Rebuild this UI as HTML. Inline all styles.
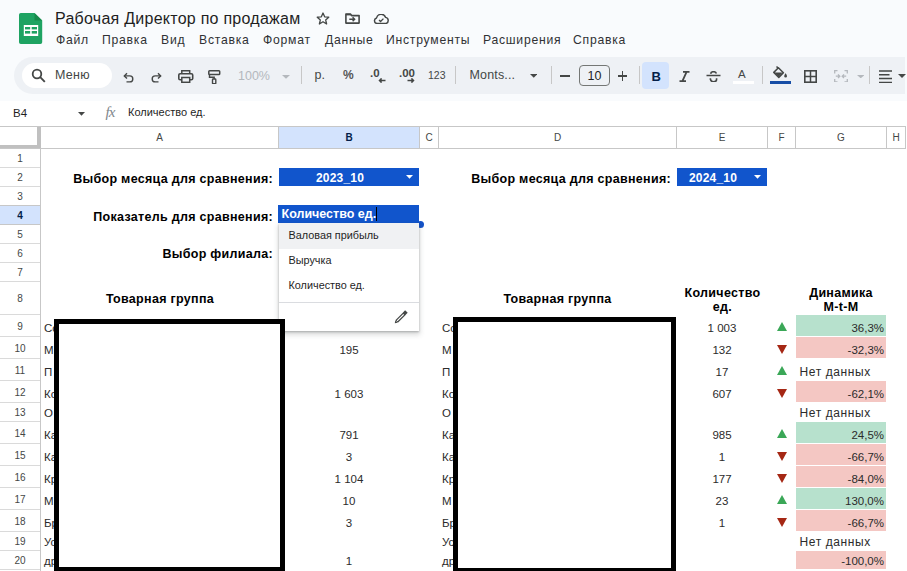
<!DOCTYPE html>
<html><head><meta charset="utf-8">
<style>
*{box-sizing:border-box;}
html,body{margin:0;padding:0;}
body{width:907px;height:571px;overflow:hidden;position:relative;background:#fff;font-family:"Liberation Sans",sans-serif;color:#1f1f1f;}
.a{position:absolute;white-space:nowrap;}
#top{position:absolute;left:0;top:0;width:907px;height:101px;background:#f9fbfd;}
#tb{position:absolute;left:14px;top:57px;width:891px;height:37px;background:#eef1f5;border-radius:19px 0 0 19px;}
.menu{font-size:12.2px;top:32.6px;color:#303134;letter-spacing:0.75px;}
.tbt{font-size:11px;color:#444746;}
.sep{position:absolute;top:66px;width:1px;height:18px;background:#c7c7c7;}
</style></head><body>
<div id="top"></div>
<div id="tb"></div>
<!-- sheets icon -->
<svg class="a" style="left:19px;top:13px" width="24" height="31" viewBox="0 0 24 31">
<path d="M1.8 0H15.5L23.2 7.5V29.2A1.8 1.8 0 0 1 21.4 31H1.8A1.8 1.8 0 0 1 0 29.2V1.8A1.8 1.8 0 0 1 1.8 0Z" fill="#1ea362"/>
<path d="M15.5 0V7.5H23.2Z" fill="#178a4b"/>
<rect x="4.8" y="12" width="14.4" height="11" fill="#fff"/>
<rect x="6" y="14" width="5.2" height="2.4" fill="#1ea362"/><rect x="12.7" y="14" width="5.3" height="2.4" fill="#1ea362"/>
<rect x="6" y="18" width="5.2" height="2.6" fill="#1ea362"/><rect x="12.7" y="18" width="5.3" height="2.6" fill="#1ea362"/>
</svg>
<div class="a" id="title" style="left:55px;top:9.7px;font-size:16px;letter-spacing:0.26px;color:#1f1f1f;">Рабочая Директор по продажам</div>
<!-- star -->
<svg class="a" style="left:316px;top:12px" width="14" height="13" viewBox="0 0 24 23"><path d="M12 1.8l2.9 6.8 7.3.6-5.5 4.8 1.7 7.2-6.4-3.9-6.4 3.9 1.7-7.2L1.8 9.2l7.3-.6z" fill="none" stroke="#444746" stroke-width="2.3" stroke-linejoin="round"/></svg>
<!-- folder move -->
<svg class="a" style="left:345px;top:13px" width="15" height="11" viewBox="0 0 15 11"><path d="M0.9 1V10.1H14.1V2.6H6.8L5.4 1Z" fill="none" stroke="#444746" stroke-width="1.6" stroke-linejoin="round"/><path d="M1 1.6H6" stroke="#444746" stroke-width="1.6"/><path d="M4.3 6.2H9.6M7.6 4.2L9.6 6.2 7.6 8.2" fill="none" stroke="#444746" stroke-width="1.5"/></svg>
<!-- cloud -->
<svg class="a" style="left:372.5px;top:13.5px" width="16.5" height="10.5" viewBox="0 0 24 15"><path d="M5.8 13.8A4.2 4.2 0 0 1 5.2 5.6 6.9 6.9 0 0 1 18.4 4.8 4.6 4.6 0 0 1 18.6 13.8Z" fill="none" stroke="#444746" stroke-width="2.1" stroke-linejoin="round"/><path d="M8.8 8.6L11 10.8 15.2 6.6" fill="none" stroke="#444746" stroke-width="2"/></svg>
<div class="a menu" style="left:56px">Файл</div>
<div class="a menu" style="left:102px">Правка</div>
<div class="a menu" style="left:161px">Вид</div>
<div class="a menu" style="left:199px">Вставка</div>
<div class="a menu" style="left:263px">Формат</div>
<div class="a menu" style="left:325px">Данные</div>
<div class="a menu" style="left:386px">Инструменты</div>
<div class="a menu" style="left:483px">Расширения</div>
<div class="a menu" style="left:573px">Справка</div>
<!-- toolbar -->
<div class="a" style="left:22px;top:63px;width:90px;height:25px;background:#fff;border-radius:13px;"></div>
<svg class="a" style="left:31px;top:68px" width="15" height="15" viewBox="0 0 15 15"><circle cx="6" cy="6" r="4.3" fill="none" stroke="#444746" stroke-width="1.8"/><path d="M9.2 9.2L13.8 13.8" stroke="#444746" stroke-width="1.9"/></svg>
<div class="a" style="left:55px;top:67.7px;font-size:12.5px;letter-spacing:0.3px;color:#444746;">Меню</div>
<!-- undo -->
<svg class="a" style="left:123px;top:72px" width="11" height="11" viewBox="0 0 11 11"><path d="M3.5 9.9H6.8A3 3 0 0 0 6.8 3.9H1.5" fill="none" stroke="#444746" stroke-width="1.4"/><path d="M4 1.2L1.3 3.9 4 6.6" fill="none" stroke="#444746" stroke-width="1.4"/></svg>
<!-- redo -->
<svg class="a" style="left:151px;top:72px" width="11" height="11" viewBox="0 0 11 11"><path d="M7.5 9.9H4.2A3 3 0 0 1 4.2 3.9H9.5" fill="none" stroke="#444746" stroke-width="1.4"/><path d="M7 1.2L9.7 3.9 7 6.6" fill="none" stroke="#444746" stroke-width="1.4"/></svg>
<!-- print -->
<svg class="a" style="left:178px;top:69.5px" width="15.5" height="13" viewBox="0 0 15.5 13"><path d="M3.8 3.5V0.8H11.7V3.5" fill="none" stroke="#444746" stroke-width="1.5"/><rect x="0.8" y="3.8" width="13.9" height="6" rx="1.3" fill="none" stroke="#444746" stroke-width="1.6"/><rect x="3.8" y="7.5" width="7.9" height="4.8" fill="#eef1f5" stroke="#444746" stroke-width="1.5"/></svg>
<!-- paint format -->
<svg class="a" style="left:208px;top:69.5px" width="12.5" height="14.5" viewBox="0 0 12.5 14.5"><rect x="0.8" y="0.8" width="10.9" height="3.8" rx="0.8" fill="none" stroke="#444746" stroke-width="1.5"/><path d="M1.5 4.6V7.2H6.2V9" fill="none" stroke="#444746" stroke-width="1.4"/><rect x="4.5" y="9" width="3.3" height="4.8" rx=".7" fill="none" stroke="#444746" stroke-width="1.4"/></svg>
<div class="a tbt" style="left:238px;top:68.5px;font-size:12.5px;color:#b4b8bd;">100%</div>
<svg class="a" style="left:282px;top:74.8px" width="8" height="4" viewBox="0 0 8 4"><path d="M0 0H8L4 3.8Z" fill="#b4b8bd"/></svg>
<div class="sep" style="left:301px"></div>
<div class="a tbt" style="left:314.5px;top:68px;font-size:12.5px;">р.</div>
<div class="a tbt" style="left:343px;top:68px;font-size:12px;font-weight:bold;letter-spacing:-0.5px;color:#555;">%</div>
<div class="a tbt" style="left:370px;top:66.5px;font-size:11.5px;font-weight:bold;">.0</div>
<svg class="a" style="left:377.5px;top:78px" width="8" height="5" viewBox="0 0 8 5"><path d="M7.5 2.5H1.5M3.6 0.4L1.5 2.5 3.6 4.6" fill="none" stroke="#444746" stroke-width="1.5"/></svg>
<div class="a tbt" style="left:399px;top:66.5px;font-size:11.5px;font-weight:bold;">.00</div>
<svg class="a" style="left:406.5px;top:78px" width="8" height="5" viewBox="0 0 8 5"><path d="M0.5 2.5H6.5M4.4 0.4L6.5 2.5 4.4 4.6" fill="none" stroke="#444746" stroke-width="1.5"/></svg>
<div class="a tbt" style="left:428px;top:69px;font-size:10.5px;">123</div>
<div class="sep" style="left:454.5px"></div>
<div class="a tbt" style="left:469.5px;top:68px;font-size:12.5px;letter-spacing:0.15px;">Monts...</div>
<svg class="a" style="left:529.5px;top:73.5px" width="7.5" height="4" viewBox="0 0 7.5 4"><path d="M0 0H7.5L3.75 3.8Z" fill="#444746"/></svg>
<div class="sep" style="left:550.5px"></div>
<div class="a" style="left:560px;top:75.2px;width:10.3px;height:1.7px;background:#444746"></div>
<div class="a" style="left:579px;top:65px;width:31px;height:21px;border:1px solid #747775;border-radius:4px;font-size:12.5px;color:#1f1f1f;text-align:center;line-height:21px;">10</div>
<div class="a" style="left:617.8px;top:74.9px;width:9.6px;height:1.7px;background:#444746"></div>
<div class="a" style="left:621.8px;top:71px;width:1.7px;height:9.5px;background:#444746"></div>
<div class="sep" style="left:639px"></div>
<div class="a" style="left:642px;top:62px;width:27px;height:27px;background:#d3e3fd;border-radius:4px;"></div>
<div class="a" style="left:651.5px;top:68.5px;font-size:13px;font-weight:bold;color:#041e49;">B</div>
<svg class="a" style="left:679px;top:71px" width="11" height="11" viewBox="0 0 11 11"><path d="M4 0.9H10.5M0.5 10.1H7M7.6 0.9L3.4 10.1" fill="none" stroke="#444746" stroke-width="1.8"/></svg>
<svg class="a" style="left:705.5px;top:70.5px" width="15" height="11.5" viewBox="0 0 15 11.5"><path d="M0.5 4.5H14.5" stroke="#444746" stroke-width="1.5"/><path d="M4.6 2.8C4.9 1.5 6 0.7 7.5 0.7 9 0.7 10 1.4 10.4 2.6" fill="none" stroke="#444746" stroke-width="1.6"/><path d="M4.4 7.2V8.3C4.8 10 6 10.8 7.6 10.8 9.4 10.8 10.6 9.7 10.6 8.2V7.2" fill="none" stroke="#444746" stroke-width="1.6"/></svg>
<div class="a tbt" style="left:738px;top:67.5px;font-size:11.5px;">A</div>
<div class="a" style="left:733px;top:81px;width:21px;height:3px;background:#fff;"></div>
<div class="sep" style="left:762px"></div>
<svg class="a" style="left:773px;top:66px" width="15" height="12.5" viewBox="0 0 15 12.5"><path d="M3.5 0.5L5 2" stroke="#444746" stroke-width="1.5"/><path d="M5.4 1.8L10.4 6.8 5.8 11.4 0.8 6.4Z" fill="none" stroke="#444746" stroke-width="1.5" stroke-linejoin="round"/><path d="M1.4 6.6H9.8L5.8 10.7Z" fill="#444746"/><path d="M12.6 7.3C12.6 7.3 11.2 9.2 11.2 10.2A1.4 1.4 0 0 0 14 10.2C14 9.2 12.6 7.3 12.6 7.3Z" fill="#444746"/></svg>
<div class="a" style="left:770px;top:81px;width:21px;height:3px;background:#174ea6;"></div>
<svg class="a" style="left:804px;top:70px" width="13" height="13" viewBox="0 0 13 13"><rect x="0.8" y="0.8" width="11.4" height="11.4" fill="none" stroke="#444746" stroke-width="1.6"/><path d="M6.5 0.5V12.5M0.5 6.5H12.5" stroke="#444746" stroke-width="1.5"/></svg>
<svg class="a" style="left:834px;top:69.5px" width="14" height="12.5" viewBox="0 0 14 12.5"><path d="M0.7 3.5V0.7H3.5M10.5 0.7H13.3V3.5M13.3 9V11.8H10.5M3.5 11.8H0.7V9" fill="none" stroke="#b4b8bd" stroke-width="1.3"/><path d="M1.8 6.2H5.6M4 4.4L5.8 6.2 4 8M12.2 6.2H8.4M10 4.4L8.2 6.2 10 8" fill="none" stroke="#b4b8bd" stroke-width="1.3"/></svg>
<svg class="a" style="left:856.5px;top:74.5px" width="7.5" height="3.5" viewBox="0 0 7.5 3.5"><path d="M0 0H7.5L3.75 3.3Z" fill="#b4b8bd"/></svg>
<div class="sep" style="left:869px"></div>
<svg class="a" style="left:879px;top:69.5px" width="13" height="13.5" viewBox="0 0 13 13.5"><path d="M0 1H13M0 4.8H10.5M0 8.6H13M0 12.4H13" stroke="#444746" stroke-width="1.5"/></svg>
<svg class="a" style="left:898px;top:74px" width="8" height="4" viewBox="0 0 8 4"><path d="M0 0H8L4 3.9Z" fill="#444746"/></svg>
<!-- formula bar -->
<div class="a" style="left:0;top:101px;width:907px;height:25px;background:#fff;"></div>
<div class="a" style="left:13px;top:106.8px;font-size:11.5px;color:#1f1f1f;">B4</div>
<svg class="a" style="left:78px;top:111.5px" width="7" height="4" viewBox="0 0 7 4"><path d="M0 0H7L3.5 3.8Z" fill="#444746"/></svg>
<div class="a" style="left:105.5px;top:103.5px;font-size:15px;font-style:italic;font-family:'Liberation Serif',serif;color:#80868b;letter-spacing:-0.8px;">fx</div>
<div class="a" style="left:128px;top:106px;font-size:11px;color:#1f1f1f;">Количество ед.</div>
<div class="a" style="left:0;top:126px;width:906px;height:1px;background:#c7c7c7;"></div>
<div class="a" style="left:0;top:148px;width:906px;height:1px;background:#c7c7c7;"></div>
<div class="a" style="left:37px;top:127px;width:4px;height:21px;background:#c0c0c0;"></div>
<div class="a" style="left:0;top:145px;width:40px;height:3px;background:#c0c0c0;"></div>
<div class="a" style="left:41px;top:127px;width:237px;height:21px;background:#fff;font-size:10px;line-height:21.6px;text-align:center;color:#444746;">A</div>
<div class="a" style="left:278px;top:127px;width:1px;height:21px;background:#c7c7c7;"></div>
<div class="a" style="left:279px;top:127px;width:140px;height:21px;background:#d3e3fd;font-size:10px;line-height:21.6px;text-align:center;color:#444746;font-weight:bold;color:#041e49;">B</div>
<div class="a" style="left:419px;top:127px;width:1px;height:21px;background:#c7c7c7;"></div>
<div class="a" style="left:420px;top:127px;width:18px;height:21px;background:#fff;font-size:10px;line-height:21.6px;text-align:center;color:#444746;">C</div>
<div class="a" style="left:438px;top:127px;width:1px;height:21px;background:#c7c7c7;"></div>
<div class="a" style="left:439px;top:127px;width:237px;height:21px;background:#fff;font-size:10px;line-height:21.6px;text-align:center;color:#444746;">D</div>
<div class="a" style="left:676px;top:127px;width:1px;height:21px;background:#c7c7c7;"></div>
<div class="a" style="left:677px;top:127px;width:90px;height:21px;background:#fff;font-size:10px;line-height:21.6px;text-align:center;color:#444746;">E</div>
<div class="a" style="left:767px;top:127px;width:1px;height:21px;background:#c7c7c7;"></div>
<div class="a" style="left:768px;top:127px;width:27px;height:21px;background:#fff;font-size:10px;line-height:21.6px;text-align:center;color:#444746;">F</div>
<div class="a" style="left:795px;top:127px;width:1px;height:21px;background:#c7c7c7;"></div>
<div class="a" style="left:796px;top:127px;width:90px;height:21px;background:#fff;font-size:10px;line-height:21.6px;text-align:center;color:#444746;">G</div>
<div class="a" style="left:886px;top:127px;width:1px;height:21px;background:#c7c7c7;"></div>
<div class="a" style="left:887px;top:127px;width:18px;height:21px;background:#fff;font-size:10px;line-height:21.6px;text-align:center;color:#444746;">H</div>
<div class="a" style="left:905px;top:127px;width:1px;height:21px;background:#c7c7c7;"></div>
<div class="a" style="left:0;top:149px;width:40px;height:18px;background:#fff;font-size:10px;padding-top:1.2px;line-height:18px;text-align:center;color:#444746;">1</div>
<div class="a" style="left:0;top:167px;width:40px;height:1px;background:#dadada;"></div>
<div class="a" style="left:0;top:168px;width:40px;height:18px;background:#fff;font-size:10px;padding-top:1.2px;line-height:18px;text-align:center;color:#444746;">2</div>
<div class="a" style="left:0;top:186px;width:40px;height:1px;background:#dadada;"></div>
<div class="a" style="left:0;top:187px;width:40px;height:18px;background:#fff;font-size:10px;padding-top:1.2px;line-height:18px;text-align:center;color:#444746;">3</div>
<div class="a" style="left:0;top:205px;width:40px;height:1px;background:#dadada;"></div>
<div class="a" style="left:0;top:206px;width:40px;height:18px;background:#d3e3fd;font-size:10px;padding-top:1.2px;line-height:18px;text-align:center;color:#444746;font-weight:bold;color:#041e49;">4</div>
<div class="a" style="left:0;top:224px;width:40px;height:1px;background:#dadada;"></div>
<div class="a" style="left:0;top:225px;width:40px;height:18px;background:#fff;font-size:10px;padding-top:1.2px;line-height:18px;text-align:center;color:#444746;">5</div>
<div class="a" style="left:0;top:243px;width:40px;height:1px;background:#dadada;"></div>
<div class="a" style="left:0;top:244px;width:40px;height:18px;background:#fff;font-size:10px;padding-top:1.2px;line-height:18px;text-align:center;color:#444746;">6</div>
<div class="a" style="left:0;top:262px;width:40px;height:1px;background:#dadada;"></div>
<div class="a" style="left:0;top:263px;width:40px;height:18px;background:#fff;font-size:10px;padding-top:1.2px;line-height:18px;text-align:center;color:#444746;">7</div>
<div class="a" style="left:0;top:281px;width:40px;height:1px;background:#dadada;"></div>
<div class="a" style="left:0;top:282px;width:40px;height:32px;background:#fff;font-size:10px;padding-top:1.2px;line-height:32px;text-align:center;color:#444746;">8</div>
<div class="a" style="left:0;top:314px;width:40px;height:1px;background:#dadada;"></div>
<div class="a" style="left:0;top:315px;width:40px;height:21px;background:#fff;font-size:10px;padding-top:1.2px;line-height:21px;text-align:center;color:#444746;">9</div>
<div class="a" style="left:0;top:336px;width:40px;height:1px;background:#dadada;"></div>
<div class="a" style="left:0;top:337px;width:40px;height:21px;background:#fff;font-size:10px;padding-top:1.2px;line-height:21px;text-align:center;color:#444746;">10</div>
<div class="a" style="left:0;top:358px;width:40px;height:1px;background:#dadada;"></div>
<div class="a" style="left:0;top:359px;width:40px;height:21px;background:#fff;font-size:10px;padding-top:1.2px;line-height:21px;text-align:center;color:#444746;">11</div>
<div class="a" style="left:0;top:380px;width:40px;height:1px;background:#dadada;"></div>
<div class="a" style="left:0;top:381px;width:40px;height:21px;background:#fff;font-size:10px;padding-top:1.2px;line-height:21px;text-align:center;color:#444746;">12</div>
<div class="a" style="left:0;top:402px;width:40px;height:1px;background:#dadada;"></div>
<div class="a" style="left:0;top:403px;width:40px;height:18px;background:#fff;font-size:10px;padding-top:1.2px;line-height:18px;text-align:center;color:#444746;">13</div>
<div class="a" style="left:0;top:421px;width:40px;height:1px;background:#dadada;"></div>
<div class="a" style="left:0;top:422px;width:40px;height:21px;background:#fff;font-size:10px;padding-top:1.2px;line-height:21px;text-align:center;color:#444746;">14</div>
<div class="a" style="left:0;top:443px;width:40px;height:1px;background:#dadada;"></div>
<div class="a" style="left:0;top:444px;width:40px;height:21px;background:#fff;font-size:10px;padding-top:1.2px;line-height:21px;text-align:center;color:#444746;">15</div>
<div class="a" style="left:0;top:465px;width:40px;height:1px;background:#dadada;"></div>
<div class="a" style="left:0;top:466px;width:40px;height:21px;background:#fff;font-size:10px;padding-top:1.2px;line-height:21px;text-align:center;color:#444746;">16</div>
<div class="a" style="left:0;top:487px;width:40px;height:1px;background:#dadada;"></div>
<div class="a" style="left:0;top:488px;width:40px;height:21px;background:#fff;font-size:10px;padding-top:1.2px;line-height:21px;text-align:center;color:#444746;">17</div>
<div class="a" style="left:0;top:509px;width:40px;height:1px;background:#dadada;"></div>
<div class="a" style="left:0;top:510px;width:40px;height:21px;background:#fff;font-size:10px;padding-top:1.2px;line-height:21px;text-align:center;color:#444746;">18</div>
<div class="a" style="left:0;top:531px;width:40px;height:1px;background:#dadada;"></div>
<div class="a" style="left:0;top:532px;width:40px;height:18px;background:#fff;font-size:10px;padding-top:1.2px;line-height:18px;text-align:center;color:#444746;">19</div>
<div class="a" style="left:0;top:550px;width:40px;height:1px;background:#dadada;"></div>
<div class="a" style="left:0;top:551px;width:40px;height:18px;background:#fff;font-size:10px;padding-top:1.2px;line-height:18px;text-align:center;color:#444746;">20</div>
<div class="a" style="left:0;top:569px;width:40px;height:1px;background:#dadada;"></div>
<div class="a" style="left:0;top:205px;width:40px;height:1px;background:#c7c7c7;"></div>
<div class="a" style="left:0;top:224px;width:40px;height:1px;background:#c7c7c7;"></div>
<div class="a" style="left:40px;top:148px;width:1px;height:423px;background:#c7c7c7;"></div>
<div class="a" style="right:634px;top:171.5px;font-weight:bold;font-size:12.5px;letter-spacing:0.3px;color:#000;">Выбор месяца для сравнения:</div>
<div class="a" style="right:236px;top:171.5px;font-weight:bold;font-size:12.5px;letter-spacing:0.3px;color:#000;">Выбор месяца для сравнения:</div>
<div class="a" style="right:634px;top:209.5px;font-weight:bold;font-size:12.5px;letter-spacing:0.3px;color:#000;">Показатель для сравнения:</div>
<div class="a" style="right:634px;top:247px;font-weight:bold;font-size:12.5px;letter-spacing:0.3px;color:#000;">Выбор филиала:</div>
<div class="a" style="left:10px;width:300px;text-align:center;top:291.5px;font-weight:bold;font-size:12.5px;letter-spacing:0.3px;color:#000;">Товарная группа</div>
<div class="a" style="left:407.5px;width:300px;text-align:center;top:291.5px;font-weight:bold;font-size:12.5px;letter-spacing:0.3px;color:#000;">Товарная группа</div>
<div class="a" style="left:572.5px;width:300px;text-align:center;top:285.5px;font-weight:bold;font-size:12.5px;letter-spacing:0.3px;color:#000;">Количество</div>
<div class="a" style="left:572.5px;width:300px;text-align:center;top:299.5px;font-weight:bold;font-size:12.5px;letter-spacing:0.3px;color:#000;">ед.</div>
<div class="a" style="left:691px;width:300px;text-align:center;top:285.5px;font-weight:bold;font-size:12.5px;letter-spacing:0.3px;color:#000;">Динамика</div>
<div class="a" style="left:691px;width:300px;text-align:center;top:299.5px;font-weight:bold;font-size:12.5px;letter-spacing:0.3px;color:#000;">M-t-M</div>
<div class="a" style="left:279px;top:168px;width:140px;height:18px;background:#1155cc;"></div>
<div class="a" style="left:190px;width:300px;text-align:center;top:170.5px;font-weight:bold;font-size:12px;letter-spacing:0.2px;color:#fff;">2023_10</div>
<svg class="a" style="left:406px;top:175px" width="7" height="4" viewBox="0 0 7 4"><path d="M0 0H7L3.5 3.8Z" fill="#fff"/></svg>
<div class="a" style="left:677px;top:168px;width:90px;height:18px;background:#1155cc;"></div>
<div class="a" style="left:563px;width:300px;text-align:center;top:170.5px;font-weight:bold;font-size:12px;letter-spacing:0.2px;color:#fff;">2024_10</div>
<svg class="a" style="left:754px;top:175px" width="7" height="4" viewBox="0 0 7 4"><path d="M0 0H7L3.5 3.8Z" fill="#fff"/></svg>
<div class="a" style="left:572px;width:300px;text-align:center;top:321.7px;font-size:11.5px;color:#2b2b2b;">1 003</div>
<svg class="a" style="left:777px;top:321.5px" width="10" height="9" viewBox="0 0 10 9"><path d="M5 0L10 9H0Z" fill="#3aa757"/></svg>
<div class="a" style="left:796px;top:315px;width:90px;height:21px;background:#b7e1cd;"></div>
<div class="a" style="right:23px;top:321.7px;font-size:11.5px;color:#2b2b2b;">36,3%</div>
<div class="a" style="left:44px;top:321.7px;font-size:11.5px;color:#2b2b2b;">Со</div>
<div class="a" style="left:442px;top:321.7px;font-size:11.5px;color:#2b2b2b;">Со</div>
<div class="a" style="left:199px;width:300px;text-align:center;top:343.7px;font-size:11.5px;color:#2b2b2b;">195</div>
<div class="a" style="left:572px;width:300px;text-align:center;top:343.7px;font-size:11.5px;color:#2b2b2b;">132</div>
<svg class="a" style="left:777px;top:344.5px" width="10" height="9" viewBox="0 0 10 9"><path d="M0 0H10L5 9Z" fill="#a52714"/></svg>
<div class="a" style="left:796px;top:337px;width:90px;height:21px;background:#f4c7c3;"></div>
<div class="a" style="right:23px;top:343.7px;font-size:11.5px;color:#2b2b2b;">-32,3%</div>
<div class="a" style="left:44px;top:343.7px;font-size:11.5px;color:#2b2b2b;">М</div>
<div class="a" style="left:442px;top:343.7px;font-size:11.5px;color:#2b2b2b;">М</div>
<div class="a" style="left:572px;width:300px;text-align:center;top:365.7px;font-size:11.5px;color:#2b2b2b;">17</div>
<svg class="a" style="left:777px;top:365.5px" width="10" height="9" viewBox="0 0 10 9"><path d="M5 0L10 9H0Z" fill="#3aa757"/></svg>
<div class="a" style="left:799.5px;top:365.2px;font-size:12px;letter-spacing:0.6px;color:#2b2b2b;">Нет данных</div>
<div class="a" style="left:44px;top:365.7px;font-size:11.5px;color:#2b2b2b;">П</div>
<div class="a" style="left:442px;top:365.7px;font-size:11.5px;color:#2b2b2b;">П</div>
<div class="a" style="left:199px;width:300px;text-align:center;top:387.7px;font-size:11.5px;color:#2b2b2b;">1 603</div>
<div class="a" style="left:572px;width:300px;text-align:center;top:387.7px;font-size:11.5px;color:#2b2b2b;">607</div>
<svg class="a" style="left:777px;top:388.5px" width="10" height="9" viewBox="0 0 10 9"><path d="M0 0H10L5 9Z" fill="#a52714"/></svg>
<div class="a" style="left:796px;top:381px;width:90px;height:21px;background:#f4c7c3;"></div>
<div class="a" style="right:23px;top:387.7px;font-size:11.5px;color:#2b2b2b;">-62,1%</div>
<div class="a" style="left:44px;top:387.7px;font-size:11.5px;color:#2b2b2b;">Ко</div>
<div class="a" style="left:442px;top:387.7px;font-size:11.5px;color:#2b2b2b;">Ко</div>
<div class="a" style="left:799.5px;top:406.2px;font-size:12px;letter-spacing:0.6px;color:#2b2b2b;">Нет данных</div>
<div class="a" style="left:44px;top:406.7px;font-size:11.5px;color:#2b2b2b;">О</div>
<div class="a" style="left:442px;top:406.7px;font-size:11.5px;color:#2b2b2b;">О</div>
<div class="a" style="left:199px;width:300px;text-align:center;top:428.7px;font-size:11.5px;color:#2b2b2b;">791</div>
<div class="a" style="left:572px;width:300px;text-align:center;top:428.7px;font-size:11.5px;color:#2b2b2b;">985</div>
<svg class="a" style="left:777px;top:428.5px" width="10" height="9" viewBox="0 0 10 9"><path d="M5 0L10 9H0Z" fill="#3aa757"/></svg>
<div class="a" style="left:796px;top:422px;width:90px;height:21px;background:#b7e1cd;"></div>
<div class="a" style="right:23px;top:428.7px;font-size:11.5px;color:#2b2b2b;">24,5%</div>
<div class="a" style="left:44px;top:428.7px;font-size:11.5px;color:#2b2b2b;">Ка</div>
<div class="a" style="left:442px;top:428.7px;font-size:11.5px;color:#2b2b2b;">Ка</div>
<div class="a" style="left:199px;width:300px;text-align:center;top:450.7px;font-size:11.5px;color:#2b2b2b;">3</div>
<div class="a" style="left:572px;width:300px;text-align:center;top:450.7px;font-size:11.5px;color:#2b2b2b;">1</div>
<svg class="a" style="left:777px;top:451.5px" width="10" height="9" viewBox="0 0 10 9"><path d="M0 0H10L5 9Z" fill="#a52714"/></svg>
<div class="a" style="left:796px;top:444px;width:90px;height:21px;background:#f4c7c3;"></div>
<div class="a" style="right:23px;top:450.7px;font-size:11.5px;color:#2b2b2b;">-66,7%</div>
<div class="a" style="left:44px;top:450.7px;font-size:11.5px;color:#2b2b2b;">Ка</div>
<div class="a" style="left:442px;top:450.7px;font-size:11.5px;color:#2b2b2b;">Ка</div>
<div class="a" style="left:199px;width:300px;text-align:center;top:472.7px;font-size:11.5px;color:#2b2b2b;">1 104</div>
<div class="a" style="left:572px;width:300px;text-align:center;top:472.7px;font-size:11.5px;color:#2b2b2b;">177</div>
<svg class="a" style="left:777px;top:473.5px" width="10" height="9" viewBox="0 0 10 9"><path d="M0 0H10L5 9Z" fill="#a52714"/></svg>
<div class="a" style="left:796px;top:466px;width:90px;height:21px;background:#f4c7c3;"></div>
<div class="a" style="right:23px;top:472.7px;font-size:11.5px;color:#2b2b2b;">-84,0%</div>
<div class="a" style="left:44px;top:472.7px;font-size:11.5px;color:#2b2b2b;">Кр</div>
<div class="a" style="left:442px;top:472.7px;font-size:11.5px;color:#2b2b2b;">Кр</div>
<div class="a" style="left:199px;width:300px;text-align:center;top:494.7px;font-size:11.5px;color:#2b2b2b;">10</div>
<div class="a" style="left:572px;width:300px;text-align:center;top:494.7px;font-size:11.5px;color:#2b2b2b;">23</div>
<svg class="a" style="left:777px;top:494.5px" width="10" height="9" viewBox="0 0 10 9"><path d="M5 0L10 9H0Z" fill="#3aa757"/></svg>
<div class="a" style="left:796px;top:488px;width:90px;height:21px;background:#b7e1cd;"></div>
<div class="a" style="right:23px;top:494.7px;font-size:11.5px;color:#2b2b2b;">130,0%</div>
<div class="a" style="left:44px;top:494.7px;font-size:11.5px;color:#2b2b2b;">М</div>
<div class="a" style="left:442px;top:494.7px;font-size:11.5px;color:#2b2b2b;">М</div>
<div class="a" style="left:199px;width:300px;text-align:center;top:516.7px;font-size:11.5px;color:#2b2b2b;">3</div>
<div class="a" style="left:572px;width:300px;text-align:center;top:516.7px;font-size:11.5px;color:#2b2b2b;">1</div>
<svg class="a" style="left:777px;top:517.5px" width="10" height="9" viewBox="0 0 10 9"><path d="M0 0H10L5 9Z" fill="#a52714"/></svg>
<div class="a" style="left:796px;top:510px;width:90px;height:21px;background:#f4c7c3;"></div>
<div class="a" style="right:23px;top:516.7px;font-size:11.5px;color:#2b2b2b;">-66,7%</div>
<div class="a" style="left:44px;top:516.7px;font-size:11.5px;color:#2b2b2b;">Бр</div>
<div class="a" style="left:442px;top:516.7px;font-size:11.5px;color:#2b2b2b;">Бр</div>
<div class="a" style="left:799.5px;top:535.2px;font-size:12px;letter-spacing:0.6px;color:#2b2b2b;">Нет данных</div>
<div class="a" style="left:44px;top:535.7px;font-size:11.5px;color:#2b2b2b;">Ус</div>
<div class="a" style="left:442px;top:535.7px;font-size:11.5px;color:#2b2b2b;">Ус</div>
<div class="a" style="left:199px;width:300px;text-align:center;top:554.7px;font-size:11.5px;color:#2b2b2b;">1</div>
<div class="a" style="left:796px;top:551px;width:90px;height:18px;background:#f4c7c3;"></div>
<div class="a" style="right:23px;top:554.7px;font-size:11.5px;color:#2b2b2b;">-100,0%</div>
<div class="a" style="left:44px;top:554.7px;font-size:11.5px;color:#2b2b2b;">др</div>
<div class="a" style="left:442px;top:554.7px;font-size:11.5px;color:#2b2b2b;">др</div>
<div class="a" style="left:278px;top:205px;width:141px;height:18px;background:#1155cc;"></div>
<div class="a" style="left:281.5px;top:206.5px;font-weight:bold;font-size:12.5px;color:#fff;">Количество ед.</div>
<div class="a" style="left:376px;top:207px;width:1px;height:14px;background:#000;"></div>
<div class="a" style="left:416.6px;top:220.7px;width:7.2px;height:7.2px;border-radius:50%;background:#1452c8;"></div>
<div class="a" style="left:279px;top:223px;width:140px;height:108px;background:#fff;box-shadow:0 1px 2px rgba(60,64,67,.35),0 3px 5px 1px rgba(60,64,67,.18);"></div>
<div class="a" style="left:279px;top:223px;width:140px;height:26px;background:#f0f1f3;"></div>
<div class="a" style="left:288.5px;top:228.5px;font-size:10.85px;color:#1f1f1f;">Валовая прибыль</div>
<div class="a" style="left:288.5px;top:253.5px;font-size:10.85px;color:#1f1f1f;">Выручка</div>
<div class="a" style="left:288.5px;top:278.5px;font-size:10.85px;color:#1f1f1f;">Количество ед.</div>
<div class="a" style="left:279px;top:302px;width:140px;height:1px;background:#dadce0;"></div>
<svg class="a" style="left:394px;top:310px" width="14" height="14" viewBox="0 0 14 14"><path d="M2.6 11.4L10.6 3.4" stroke="#444746" stroke-width="3.6"/><path d="M3.1 10.9L9.7 4.3" stroke="#fff" stroke-width="1.2"/><path d="M10.2 3.8L12.4 1.6" stroke="#444746" stroke-width="3.6"/><path d="M0.8 13.2L1.3 10.4 3.6 12.7Z" fill="#444746"/></svg>
<div class="a" style="left:54px;top:319px;width:231px;height:253px;border:5px solid #000;background:#fff;"></div>
<div class="a" style="left:453px;top:317px;width:223px;height:256px;border:5px solid #000;background:#fff;"></div>
</body></html>
